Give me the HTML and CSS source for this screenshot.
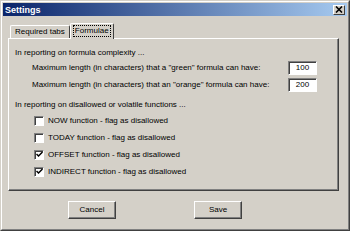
FILE: index.html
```html
<!DOCTYPE html>
<html lang="en">
  <head>
    <meta charset="UTF-8" />
    <title>Settings</title>
    <link rel="stylesheet" href="styles.css">
  </head>
  <body>
    <div class="window">
      <div class="frame">
        <div class="titlebar">
          <span class="title">Settings</span>
          <span class="close-button">
            <svg width="8" height="7" viewBox="0 0 8 7">
              <path d="M1 0.5 L7 6.5 M7 0.5 L1 6.5" stroke="#000" stroke-width="1.6" />
            </svg>
          </span>
        </div>

        <div class="tab-strip">
          <div class="tab">Required tabs</div>
          <div class="tab selected"><span class="focus">Formulae</span></div>
        </div>

        <div class="panel">
          <div class="section-label">In reporting on formula complexity ...</div>
          <div class="limit-row">
            <span class="limit-label">Maximum length (in characters) that a "green" formula can have:</span>
            <span class="number-box">100</span>
          </div>
          <div class="limit-row">
            <span class="limit-label">Maximum length (in characters) that an "orange" formula can have:</span>
            <span class="number-box">200</span>
          </div>

          <div class="section-label second">In reporting on disallowed or volatile functions ...</div>
          <div class="checks">
            <div class="check-row">
              <span class="checkbox"></span>
              <span>NOW function - flag as disallowed</span>
            </div>
            <div class="check-row">
              <span class="checkbox"></span>
              <span>TODAY function - flag as disallowed</span>
            </div>
            <div class="check-row">
              <span class="checkbox">
                <svg width="7" height="7" viewBox="0 0 7 7">
                  <path d="M0.5 3 L2.5 5 L6.5 1" fill="none" stroke="#000" stroke-width="1.5" />
                </svg>
              </span>
              <span>OFFSET function - flag as disallowed</span>
            </div>
            <div class="check-row">
              <span class="checkbox">
                <svg width="7" height="7" viewBox="0 0 7 7">
                  <path d="M0.5 3 L2.5 5 L6.5 1" fill="none" stroke="#000" stroke-width="1.5" />
                </svg>
              </span>
              <span>INDIRECT function - flag as disallowed</span>
            </div>
          </div>
        </div>

        <div class="button-row">
          <div class="button">Cancel</div>
          <div class="button">Save</div>
        </div>
      </div>
    </div>
  </body>
</html>
```

FILE: styles.css
```css
* {
  margin: 0;
  padding: 0;
  box-sizing: border-box;
}

body {
  font-family: "Liberation Sans", Arial, sans-serif;
  font-size: 8px;
  color: #000000;
  background: #d4d0c8;
}

.window {
  width: 350px;
  height: 231px;
  border: 1px solid;
  border-color: #d4d0c8 #404040 #404040 #d4d0c8;
}

.frame {
  height: 100%;
  border: 1px solid;
  border-color: #ffffff #808080 #808080 #ffffff;
  padding: 1px;
  display: flex;
  flex-direction: column;
}

.titlebar {
  height: 13px;
  display: flex;
  align-items: center;
  justify-content: space-between;
  padding: 0 2px 0 2px;
  background: linear-gradient(to right, #0a246a, #a6caf0);
}

.title {
  color: #ffffff;
  font-weight: bold;
  font-size: 9px;
}

.close-button {
  width: 12px;
  height: 10px;
  display: flex;
  align-items: center;
  justify-content: center;
  background: #d4d0c8;
  border: 1px solid;
  border-color: #ffffff #404040 #404040 #ffffff;
}

.tab-strip {
  display: flex;
  align-items: flex-end;
  height: 22px;
  padding-left: 7px;
}

.tab {
  height: 13px;
  padding: 0 4px;
  line-height: 11px;
  border: 1px solid;
  border-bottom: none;
  border-color: #ffffff #404040 #404040 #ffffff;
  border-radius: 2px 2px 0 0;
}

.tab.selected {
  height: 16px;
  margin-bottom: -1px;
  padding: 1px 3px 0 3px;
  background: #d4d0c8;
  position: relative;
  z-index: 1;
}

.focus {
  display: inline-block;
  outline: 1px dotted #000000;
  line-height: 10px;
  padding: 0 1px;
}

.panel {
  margin: 0 8px 0 5px;
  height: 153px;
  border: 1px solid;
  border-color: #ffffff #404040 #404040 #ffffff;
  box-shadow: inset -1px -1px 0 #808080;
  padding: 8px 21px 0 6px;
}

.section-label {
  height: 12px;
  line-height: 12px;
}

.section-label.second {
  margin-top: 6px;
}

.limit-row {
  display: flex;
  align-items: center;
  height: 17px;
  padding-left: 17px;
}

.limit-label {
  flex: 1;
}

.number-box {
  width: 29px;
  height: 14px;
  line-height: 12px;
  text-align: center;
  background: #ffffff;
  border: 1px solid;
  border-color: #808080 #ffffff #ffffff #808080;
  box-shadow: inset 1px 1px 0 #404040;
}

.checks {
  margin-top: 1px;
}

.check-row {
  display: flex;
  align-items: center;
  gap: 4px;
  height: 17px;
  padding-left: 19px;
}

.checkbox {
  width: 10px;
  height: 10px;
  display: flex;
  align-items: center;
  justify-content: center;
  background: #ffffff;
  border: 1px solid;
  border-color: #808080 #ffffff #ffffff #808080;
  box-shadow: inset 1px 1px 0 #404040;
}

.button-row {
  display: flex;
  gap: 78px;
  padding: 10px 0 0 65px;
}

.button {
  width: 48px;
  height: 18px;
  line-height: 16px;
  text-align: center;
  border: 1px solid;
  border-color: #ffffff #404040 #404040 #ffffff;
  box-shadow: inset -1px -1px 0 #808080;
}
```
